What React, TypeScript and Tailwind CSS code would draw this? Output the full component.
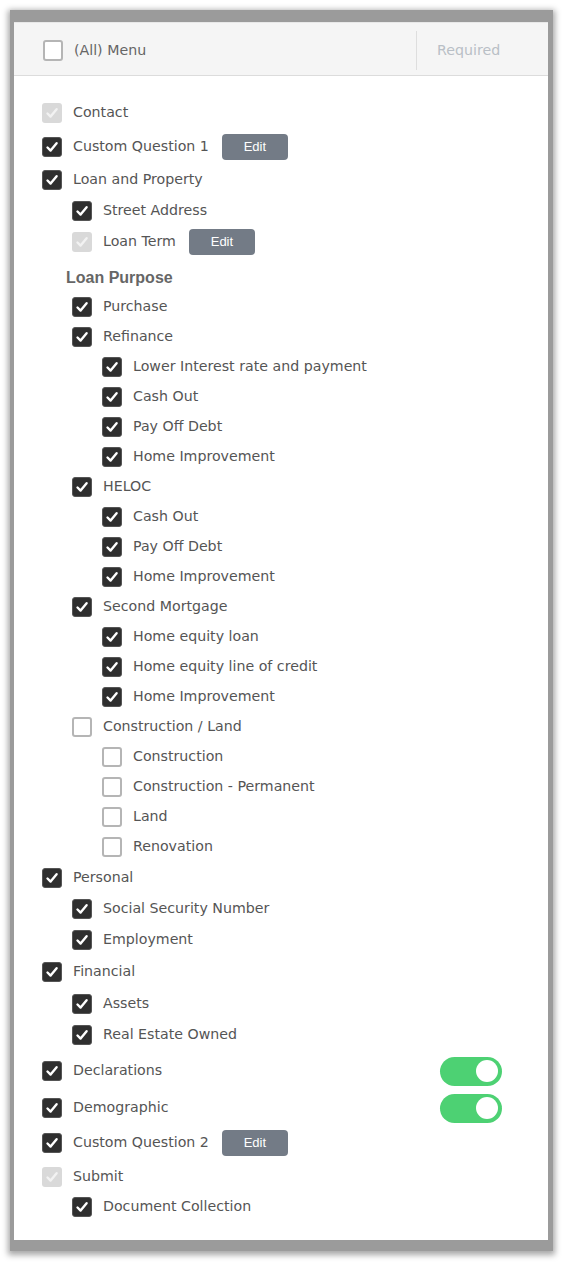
import React from 'react';

type Row = {
  label: string;
  level: 0 | 1 | 2;
  state: 'on' | 'off' | 'locked';
  mt?: string;
  edit?: boolean;
  toggle?: boolean;
};

const rowsTop: Row[] = [
  { label: 'Contact', level: 0, state: 'locked' },
  { label: 'Custom Question 1', level: 0, state: 'on', mt: 'mt-[4px]', edit: true },
  { label: 'Loan and Property', level: 0, state: 'on', mt: 'mt-[3px]' },
  { label: 'Street Address', level: 1, state: 'on', mt: 'mt-[1px]' },
  { label: 'Loan Term', level: 1, state: 'locked', mt: 'mt-[1px]', edit: true },
];

const rowsPurpose: Row[] = [
  { label: 'Purchase', level: 1, state: 'on' },
  { label: 'Refinance', level: 1, state: 'on' },
  { label: 'Lower Interest rate and payment', level: 2, state: 'on' },
  { label: 'Cash Out', level: 2, state: 'on' },
  { label: 'Pay Off Debt', level: 2, state: 'on' },
  { label: 'Home Improvement', level: 2, state: 'on' },
  { label: 'HELOC', level: 1, state: 'on' },
  { label: 'Cash Out', level: 2, state: 'on' },
  { label: 'Pay Off Debt', level: 2, state: 'on' },
  { label: 'Home Improvement', level: 2, state: 'on' },
  { label: 'Second Mortgage', level: 1, state: 'on' },
  { label: 'Home equity loan', level: 2, state: 'on' },
  { label: 'Home equity line of credit', level: 2, state: 'on' },
  { label: 'Home Improvement', level: 2, state: 'on' },
  { label: 'Construction / Land', level: 1, state: 'off' },
  { label: 'Construction', level: 2, state: 'off' },
  { label: 'Construction - Permanent', level: 2, state: 'off' },
  { label: 'Land', level: 2, state: 'off' },
  { label: 'Renovation', level: 2, state: 'off' },
  { label: 'Personal', level: 0, state: 'on', mt: 'mt-[1px]' },
  { label: 'Social Security Number', level: 1, state: 'on', mt: 'mt-[1px]' },
  { label: 'Employment', level: 1, state: 'on', mt: 'mt-[1px]' },
  { label: 'Financial', level: 0, state: 'on', mt: 'mt-[2px]' },
  { label: 'Assets', level: 1, state: 'on', mt: 'mt-[2px]' },
  { label: 'Real Estate Owned', level: 1, state: 'on', mt: 'mt-[1px]' },
  { label: 'Declarations', level: 0, state: 'on', mt: 'mt-[6px]', toggle: true },
  { label: 'Demographic', level: 0, state: 'on', mt: 'mt-[7px]', toggle: true },
  { label: 'Custom Question 2', level: 0, state: 'on', mt: 'mt-[5px]', edit: true },
  { label: 'Submit', level: 0, state: 'locked', mt: 'mt-[4px]' },
  { label: 'Document Collection', level: 1, state: 'on' },
];

const indent = {
  0: 'pl-[28px]',
  1: 'pl-[58px]',
  2: 'pl-[88px]',
};

function Box({ state }: { state: Row['state'] }) {
  if (state === 'off') {
    return <span className="w-[20px] h-[20px] shrink-0 rounded-[3px] border-2 border-[#b5b5b5] bg-white" />;
  }
  const locked = state === 'locked';
  return (
    <span
      className={
        locked
          ? 'w-[20px] h-[20px] shrink-0 rounded-[3px] bg-[#d9d9d9] flex items-center justify-center'
          : 'w-[20px] h-[20px] shrink-0 rounded-[3px] bg-[#2f2f2f] border border-[#555] flex items-center justify-center'
      }
    >
      <svg width="14" height="14" viewBox="0 0 14 14">
        <path
          d="M2.5 7.5 L5.6 10.6 L11.6 3.2"
          fill="none"
          stroke={locked ? '#f2f2f2' : '#ffffff'}
          strokeWidth="2.4"
          strokeLinecap="round"
          strokeLinejoin="round"
        />
      </svg>
    </span>
  );
}

function Toggle() {
  return (
    <span className="ml-auto mr-[46px] w-[62px] h-[29px] rounded-full bg-[#4dd173] flex items-center justify-end pr-[4px]">
      <span className="w-[22px] h-[22px] rounded-full bg-white" />
    </span>
  );
}

function ItemRow({ row }: { row: Row }) {
  return (
    <div className={`h-[30px] flex items-center ${indent[row.level]} ${row.mt ?? ''}`}>
      <Box state={row.state} />
      <span className="ml-[11px] text-[14.2px] text-[#555] whitespace-nowrap">{row.label}</span>
      {row.edit && (
        <span className="ml-[13px] w-[66px] h-[26px] rounded-[4px] bg-[#737b86] text-white text-[13px] flex items-center justify-center font-['Liberation_Sans',Arial,sans-serif]">
          Edit
        </span>
      )}
      {row.toggle && <Toggle />}
    </div>
  );
}

export default function App() {
  return (
    <div className="w-[563px] h-[1264px] bg-white pt-[10px] pl-[10px] font-['DejaVu_Sans',Verdana,sans-serif]">
      <div className="w-[543px] border-t-[12px] border-l-[4px] border-r-[5px] border-b-[11px] border-[#9b9b9b] shadow-[0_2px_6px_2px_rgba(0,0,0,0.35)] bg-white">
        <div className="h-[54px] pt-[3px] bg-[#f5f5f5] border-t border-t-[#e8e8e8] border-b border-b-[#dcdcdc] flex items-center">
          <div className="flex items-center pl-[29px] w-[402px]">
            <span className="w-[20px] h-[21px] rounded-[3px] border-2 border-[#b5b5b5] bg-white" />
            <span className="ml-[11px] text-[14.2px] text-[#666]">(All) Menu</span>
          </div>
          <div className="w-px h-[39px] bg-[#dedede]" />
          <span className="ml-[20px] text-[14.2px] text-[#b9bfc6]">Required</span>
        </div>
        <div className="pt-[22px] pb-[18px]">
          {rowsTop.map((r, i) => (
            <ItemRow key={i} row={r} />
          ))}
          <div className="h-[28px] mt-[7px] flex items-center pl-[52px] text-[16px] font-bold text-[#666] font-['Liberation_Sans',Arial,sans-serif]">
            Loan Purpose
          </div>
          {rowsPurpose.map((r, i) => (
            <ItemRow key={i} row={r} />
          ))}
        </div>
      </div>
    </div>
  );
}
